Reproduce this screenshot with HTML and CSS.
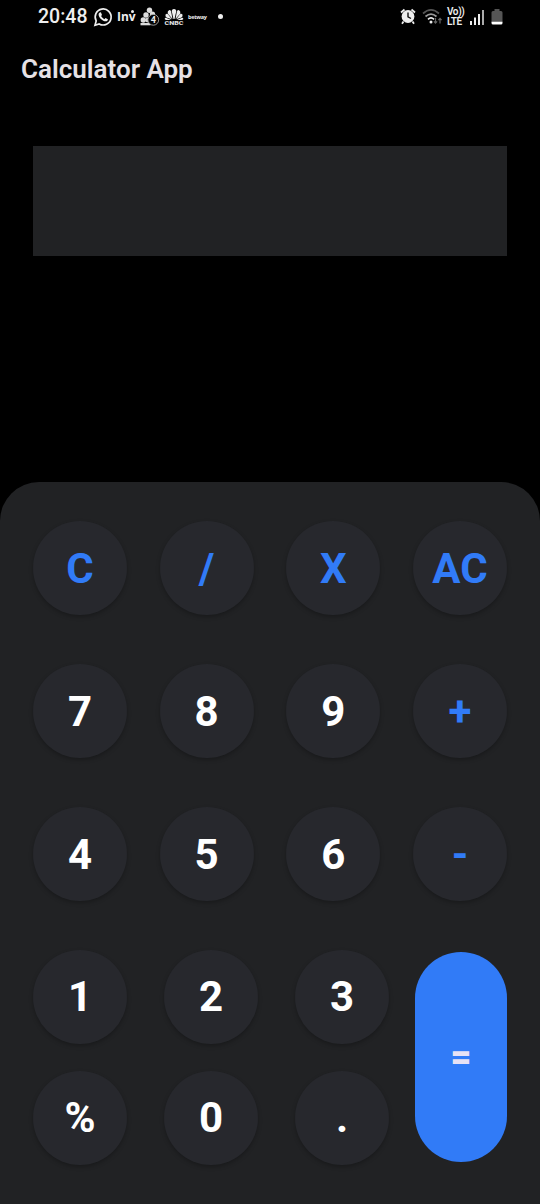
FILE: index.html
```html
<!DOCTYPE html>
<html lang="en">
<head>
<meta charset="utf-8">
<title>Calculator App</title>
<link rel="stylesheet" href="styles.css">
</head>
<body>
<div class="screen">
  <header class="status">
    <div class="status-left">
      <span class="time">20:48</span>
      <svg class="whatsapp" width="20" height="20" viewBox="0 0 20 20" fill="none" stroke="#eee" stroke-width="1.7"><path d="M2 18.200l1.200-4.300a8 8 0 1 1 3 3z"/><path d="M6.700 5.600l1.200-.3 1.100 2.600-.9 1.200c.8 1.500 1.800 2.400 3.300 3.100l1.100-1.200 2.400 1.200c-.2 1.900-1.800 2.500-3.400 2-3.100-.9-5.800-3.800-5.900-6.600 0-.9.500-1.500 1.100-2z" fill="#eee" stroke="none"/></svg>
      <span class="inv">Inv<i></i></span>
      <svg class="clover" width="20" height="20" viewBox="0 0 20 20"><g fill="#ddd"><circle cx="9.500" cy="3.200" r="2.700"/><circle cx="6" cy="8" r="2.700"/><circle cx="12.500" cy="7" r="2.600"/><circle cx="3.300" cy="13" r="2.700"/><circle cx="8" cy="13" r="2.500"/><path d="M.5 16h10v2.300H.5z"/></g><circle cx="13.300" cy="12.800" r="5.400" fill="#050505" stroke="#aaa" stroke-width=".9"/><text x="13.300" y="16" class="badge-digit">4</text></svg>
      <svg class="cnbc" width="20" height="18" viewBox="0 0 20 18"><g fill="#eee"><path d="M9.500 11L7.800 3.500Q7.600 1 10 1t2.200 2.500L10.500 11z"/><path d="M8.500 11L3.700 5.500Q3.300 3 5 2.200T7.200 4z"/><path d="M11.500 11l4.800-5.500Q16.700 3 15 2.200T12.800 4z"/><path d="M7.800 11.300L2.500 9.500Q.7 8 1.700 6.500t2.500 0z"/><path d="M12.200 11.300l5.300-1.800q1.800-1.500.8-3t-2.500 0z"/><path d="M7 12H2q-1.800-.6-1.200-1.700T2.500 10z"/><path d="M13 12h5q1.800-.6 1.200-1.700T17.500 10z"/></g><text x="10" y="17" class="cnbc-text" textLength="19" lengthAdjust="spacingAndGlyphs">CNBC</text></svg>
      <span class="betway">betway</span>
      <i class="dot"></i>
    </div>
    <div class="status-right">
      <svg width="16" height="17" viewBox="0 0 16 17"><circle cx="8" cy="8.500" r="6.400" fill="#eee"/><path d="M1 4.500L4.500 1.500M15 4.500l-3.500-3M3.500 13.500L2 15.800M12.500 13.500l1.500 2.300" stroke="#eee" stroke-width="1.800"/><path d="M8 4.500v4.300l3 1.700" fill="none" stroke="#111" stroke-width="1.400"/></svg>
      <svg class="wifi" width="21" height="17" viewBox="0 0 21 17" fill="none" stroke-width="1.700"><path d="M1 5.500q8-7.200 16 0" stroke="#555"/><path d="M3.500 8.500q5.500-4.800 11 0" stroke="#999"/><path d="M6 11.300q3-2.700 6 0" stroke="#eee"/><circle cx="9" cy="14" r="1.500" fill="#eee" stroke="none"/><path d="M13.500 10v5m-1.600-1.600l1.600 1.800 1.600-1.800M18 15.500v-5m-1.600 1.600L18 10.300l1.600 1.800" stroke="#666" stroke-width="1.200"/></svg>
      <span class="volte"><span>Vo))</span><span>LTE</span></span>
      <svg class="signal" width="16" height="16" viewBox="0 0 16 16" fill="#eee"><path d="M1 12h2v4H1zM5 8.500h2V16H5zM9 5h2v11H9z"/><path d="M13 1h2v15h-2z" fill="#aaa"/></svg>
      <svg class="battery" width="12" height="16" viewBox="0 0 12 16"><path d="M3.500 0h5v2H10q1.500 0 1.500 1.500V12H.5V3.500Q.5 2 2 2h1.500z" fill="#555"/><path d="M.5 12.500h11V14q0 1.500-1.500 1.500H2Q.5 15.500.5 14z" fill="#fff"/></svg>
    </div>
  </header>
  <h1 class="title">Calculator App</h1>
  <div class="display"></div>
  <main class="keypad">
    <div class="row">
      <button class="key op">C</button><button class="key op">/</button><button class="key op">X</button><button class="key op">AC</button>
    </div>
    <div class="row">
      <button class="key">7</button><button class="key">8</button><button class="key">9</button><button class="key op">+</button>
    </div>
    <div class="row">
      <button class="key">4</button><button class="key">5</button><button class="key">6</button><button class="key op">-</button>
    </div>
    <div class="bottom">
      <div class="digits">
        <button class="key">1</button><button class="key">2</button><button class="key">3</button>
        <button class="key">%</button><button class="key">0</button><button class="key">.</button>
      </div>
      <button class="equals">=</button>
    </div>
  </main>
</div>
</body>
</html>
```

FILE: styles.css
```css
* { box-sizing: border-box; }
body { margin: 0; background: #000; font-family: Roboto, sans-serif; }
.screen { width: 540px; height: 1204px; display: flex; flex-direction: column; background: #000; overflow: hidden; }
.status { height: 33px; flex: none; display: flex; justify-content: space-between; padding: 0 37px 0 38px; color: #eee; }
.status-left, .status-right { display: flex; align-items: center; height: 33px; }
.time { font-size: 19.5px; width: 50px; line-height: 33px; font-weight: 500; white-space: nowrap; }
.whatsapp { margin-left: 5px; }
.inv { display: flex; margin-left: 4px; width: 18px; font: 700 12px/16px "Open Sans", sans-serif; white-space: nowrap; }
.inv i { width: 3px; height: 3px; border-radius: 50%; background: #eee; margin: 1px 0 0 -5px; flex: none; }
.clover { margin-left: 5px; }
.badge-digit { font: 700 9px Roboto, sans-serif; fill: #eee; text-anchor: middle; }
.cnbc { margin: 1px 0 0 4px; }
.cnbc-text { font: 900 6px Roboto, sans-serif; fill: #ddd; text-anchor: middle; }
.betway { margin-left: 4px; width: 19px; font: 700 5.5px/8px "Open Sans", sans-serif; letter-spacing: -.3px; white-space: nowrap; }
.dot { width: 5px; height: 5px; border-radius: 50%; background: #eee; margin-left: 11px; }
.wifi { margin-left: 6px; }
.volte { display: flex; flex-direction: column; width: 18px; margin-left: 4px; font-size: 10px; line-height: 10px; font-weight: 600; letter-spacing: -.4px; white-space: nowrap; }
.signal { margin-left: 4px; }
.battery { margin-left: 6px; }
.title { margin: 20px 0 0 21px; height: 32px; font-size: 26px; line-height: 32px; font-weight: 600; color: #e6e1e5; white-space: nowrap; }
.display { height: 110px; margin: 60.5px 33px 0; background: #212224; flex: none; }
.keypad { margin-top: 226px; flex: 1; padding: 39px 33px; border-radius: 39px 39px 0 0; background: #212224; display: flex; flex-direction: column; gap: 49px; }
.row { display: flex; justify-content: space-between; }
.key { width: 94px; height: 94px; padding: 1px 0 0; border: 0; border-radius: 50%; background: #27282d; color: #fff; font: 700 42px/93px Roboto, sans-serif; text-align: center; box-shadow: 0 2px 4px rgba(0, 0, 0, .25); }
.op { color: #317bf7; }
.bottom { display: flex; justify-content: space-between; align-items: flex-start; }
.digits { display: grid; grid-template-columns: repeat(3, 94px); gap: 27px 37px; }
.digits .key { padding-top: 0; }
.equals { width: 92px; height: 210px; margin-top: 2px; padding: 0; border: 0; border-radius: 46px; background: #317bf7; color: #e6e1f5; font: 900 36px/208px Roboto, sans-serif; }
```
